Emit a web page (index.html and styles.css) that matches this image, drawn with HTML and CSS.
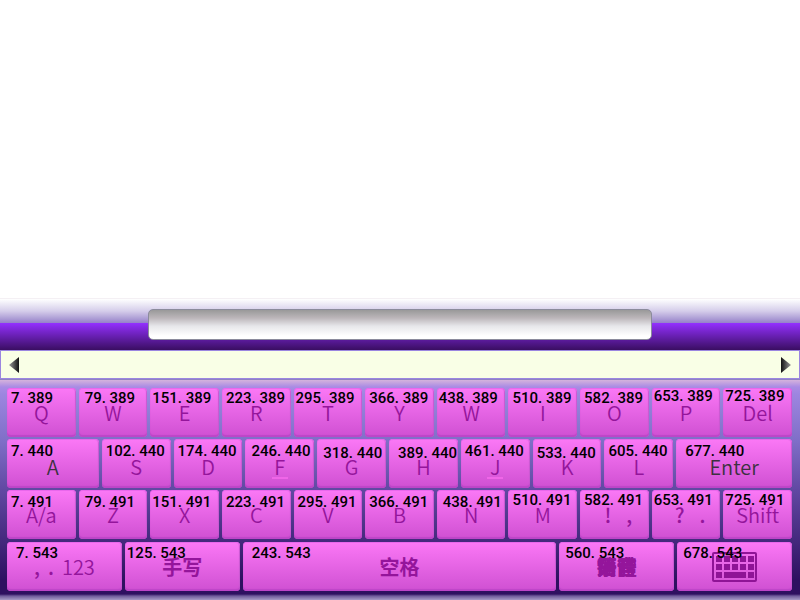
FILE: index.html
```
<!DOCTYPE html>
<html lang="zh-CN">
<head>
<meta charset="utf-8">
<meta name="viewport" content="width=device-width, initial-scale=1">
<title>Keyboard</title>
<link rel="stylesheet" href="styles.css">
</head>
<body>
<main class="screen">
<section class="entry"><input class="entry-box" type="text" aria-label="Text entry"></section>
<nav class="candidates" aria-label="Candidates">
<button class="arrow" type="button" aria-label="Previous"><svg width="10" height="16" viewBox="0 0 10 16"><defs><linearGradient id="g1"><stop offset="0" stop-color="#999"/><stop offset="1" stop-color="#111"/></linearGradient></defs><path d="M10 0V16L0 8Z" fill="url(#g1)"/></svg></button>
<button class="arrow" type="button" aria-label="Next"><svg width="10" height="16" viewBox="0 0 10 16"><defs><linearGradient id="g2"><stop offset="0" stop-color="#111"/><stop offset="1" stop-color="#999"/></linearGradient></defs><path d="M0 0V16L10 8Z" fill="url(#g2)"/></svg></button>
</nav>
<section class="keyboard">
<div class="row row-top">
<button class="key"><span class="pos">7. 389</span><span class="cap">Q</span></button>
<button class="key"><span class="pos inset">79. 389</span><span class="cap">W</span></button>
<button class="key"><span class="pos tight">151. 389</span><span class="cap">E</span></button>
<button class="key"><span class="pos">223. 389</span><span class="cap">R</span></button>
<button class="key"><span class="pos tight">295. 389</span><span class="cap">T</span></button>
<button class="key"><span class="pos">366. 389</span><span class="cap">Y</span></button>
<button class="key"><span class="pos tight">438. 389</span><span class="cap">W</span></button>
<button class="key"><span class="pos">510. 389</span><span class="cap">I</span></button>
<button class="key"><span class="pos">582. 389</span><span class="cap">O</span></button>
<button class="key"><span class="pos tight high">653. 389</span><span class="cap">P</span></button>
<button class="key"><span class="pos tight high">725. 389</span><span class="cap">Del</span></button>
</div>
<div class="row row-home">
<button class="key"><span class="pos low">7. 440</span><span class="cap dark">A</span></button>
<button class="key"><span class="pos low">102. 440</span><span class="cap">S</span></button>
<button class="key"><span class="pos low">174. 440</span><span class="cap">D</span></button>
<button class="key bump"><span class="pos inset low">246. 440</span><span class="cap">F</span></button>
<button class="key"><span class="pos inset lower">318. 440</span><span class="cap">G</span></button>
<button class="key"><span class="pos wide lower">389. 440</span><span class="cap">H</span></button>
<button class="key bump"><span class="pos low">461. 440</span><span class="cap">J</span></button>
<button class="key"><span class="pos lower">533. 440</span><span class="cap">K</span></button>
<button class="key"><span class="pos low">605. 440</span><span class="cap">L</span></button>
<button class="key"><span class="pos wide low">677. 440</span><span class="cap dark">Enter</span></button>
</div>
<div class="row row-bottom">
<button class="key"><span class="pos low">7. 491</span><span class="cap">A/a</span></button>
<button class="key"><span class="pos inset low">79. 491</span><span class="cap">Z</span></button>
<button class="key"><span class="pos tight low">151. 491</span><span class="cap">X</span></button>
<button class="key"><span class="pos low">223. 491</span><span class="cap">C</span></button>
<button class="key"><span class="pos low">295. 491</span><span class="cap">V</span></button>
<button class="key"><span class="pos low">366. 491</span><span class="cap">B</span></button>
<button class="key"><span class="pos inset low">438. 491</span><span class="cap">N</span></button>
<button class="key"><span class="pos">510. 491</span><span class="cap">M</span></button>
<button class="key"><span class="pos">582. 491</span><span class="cap marks"><span>!</span><span>,</span></span></button>
<button class="key"><span class="pos tight">653. 491</span><span class="cap marks"><span>?</span><span>.</span></span></button>
<button class="key"><span class="pos tight">725. 491</span><span class="cap">Shift</span></button>
</div>
<div class="row row-space">
<button class="key"><span class="pos wide">7. 543</span><span class="cap digits"><b>,</b><b>.</b>123</span></button>
<button class="key"><span class="pos tight">125. 543</span><span class="cap han">手写</span></button>
<button class="key"><span class="pos wide">243. 543</span><span class="cap han">空格</span></button>
<button class="key"><span class="pos inset">560. 543</span><span class="cap han stack"><span>繁體</span><span>拼音</span><span>语言</span><span>简體</span></span></button>
<button class="key"><span class="pos inset">678. 543</span><span class="cap"><svg class="board" width="45" height="30" viewBox="0 0 45 30" aria-hidden="true"><rect x="1" y="1" width="43" height="28" rx="1" fill="none" stroke="#8f1496" stroke-width="2"/><path fill="#8f1496" d="M4 4h6v6h-6zM12 4h6v6h-6zM20 4h6v6h-6zM28 4h6v6h-6zM36 4h6v6h-6zM4 12h6v6h-6zM12 12h6v6h-6zM20 12h6v6h-6zM28 12h6v6h-6zM36 12h6v6h-6zM4 20h6v6h-6zM12 20h22v6h-22zM36 20h6v6h-6z"/></svg></span></button>
</div>
</section>
</main>
</body>
</html>
```
FILE: styles.css
```
* { box-sizing: border-box; }
body { margin: 0; background: #fff; font-family: Roboto, "Liberation Sans", sans-serif; }
button { padding: 0; border: 0; background: none; color: inherit; font: inherit; }
.screen { min-height: 100vh; display: flex; flex-direction: column; justify-content: flex-end; }
.entry {
  display: flex; justify-content: center; padding: 10px 0;
  background: linear-gradient(#fff 0, #d5cdea 12px, #9581c9 24px, #9331ff 24px, #862be6 28px, #3a0e62 51px);
  border-top: 1px solid #f4f0f4;
}
.entry-box {
  width: 63%; height: 31px; padding: 0 8px; border: 1px solid #8b8b9c; border-radius: 5px;
  background: linear-gradient(#999 0, #bcb6ba 8px, #e6e6ea 16px, #fff 26px); font-size: 16px;
}
.candidates {
  display: flex; justify-content: space-between; align-items: center; height: 29px; padding: 0 8px;
  border: 1px solid #9b86e0; background: #f9ffe6;
}
.arrow { display: flex; }
.keyboard {
  display: grid; gap: 2px; padding: 8px 8px 9px 7px;
  background: linear-gradient(#d5b2dc 0, #a98be4 7px, #9d86e0 14px, #806fc8 60px, #6148a2 110px, #2e1060 200px, #2e1060 214px, #6f5b9b 216px, #a79bc6 100%);
  border-top: 1px solid #8f82c4;
}
.row { display: grid; gap: 3px; }
.row-top, .row-bottom { grid-template-columns: repeat(11, 1fr); }
.row-home { grid-template-columns: 92fr repeat(8, 69fr) 116fr; }
.row-space { grid-template-columns: 115fr 115fr 314fr 115fr 115fr; margin-top: 1px; }
.key {
  position: relative; height: 49px; min-width: 0; overflow: visible; border-radius: 4px;
  background: linear-gradient(#fb78f6, #cf50d2);
  box-shadow: inset 0 1px #e967ec, inset 0 -2px 1px #bd45c8, inset -1px 0 1px #c95bd2;
}
.pos {
  position: absolute; z-index: 1; left: 4px; top: 0; color: #000;
  font-size: 15px; line-height: 20px; font-weight: 500; white-space: pre;
}
.tight { left: 2px; }
.inset { left: 6px; }
.wide { left: 9px; }
.high { top: -2px; }
.low { top: 2px; }
.lower { top: 4px; }
.row-space .pos { top: 1px; }
.cap {
  display: flex; justify-content: center; align-items: center; height: 100%;
  color: #94159b; font: 350 20px/24px "Noto Sans CJK SC", sans-serif;
}
.row-home .cap { padding-top: 6px; }
.dark { color: #3c3140; }
.marks { gap: 15px; font-weight: 500; padding-left: 8px; }
.digits { gap: 8px; }
.digits b { font-weight: 500; }
.han { font-weight: 700; }
.stack { display: grid; }
.stack span { grid-area: 1 / 1; }
.bump::after {
  content: ""; position: absolute; left: 50%; bottom: 9px; width: 16px; height: 2px; margin-left: -8px;
  background: #f066e8;
}
```
